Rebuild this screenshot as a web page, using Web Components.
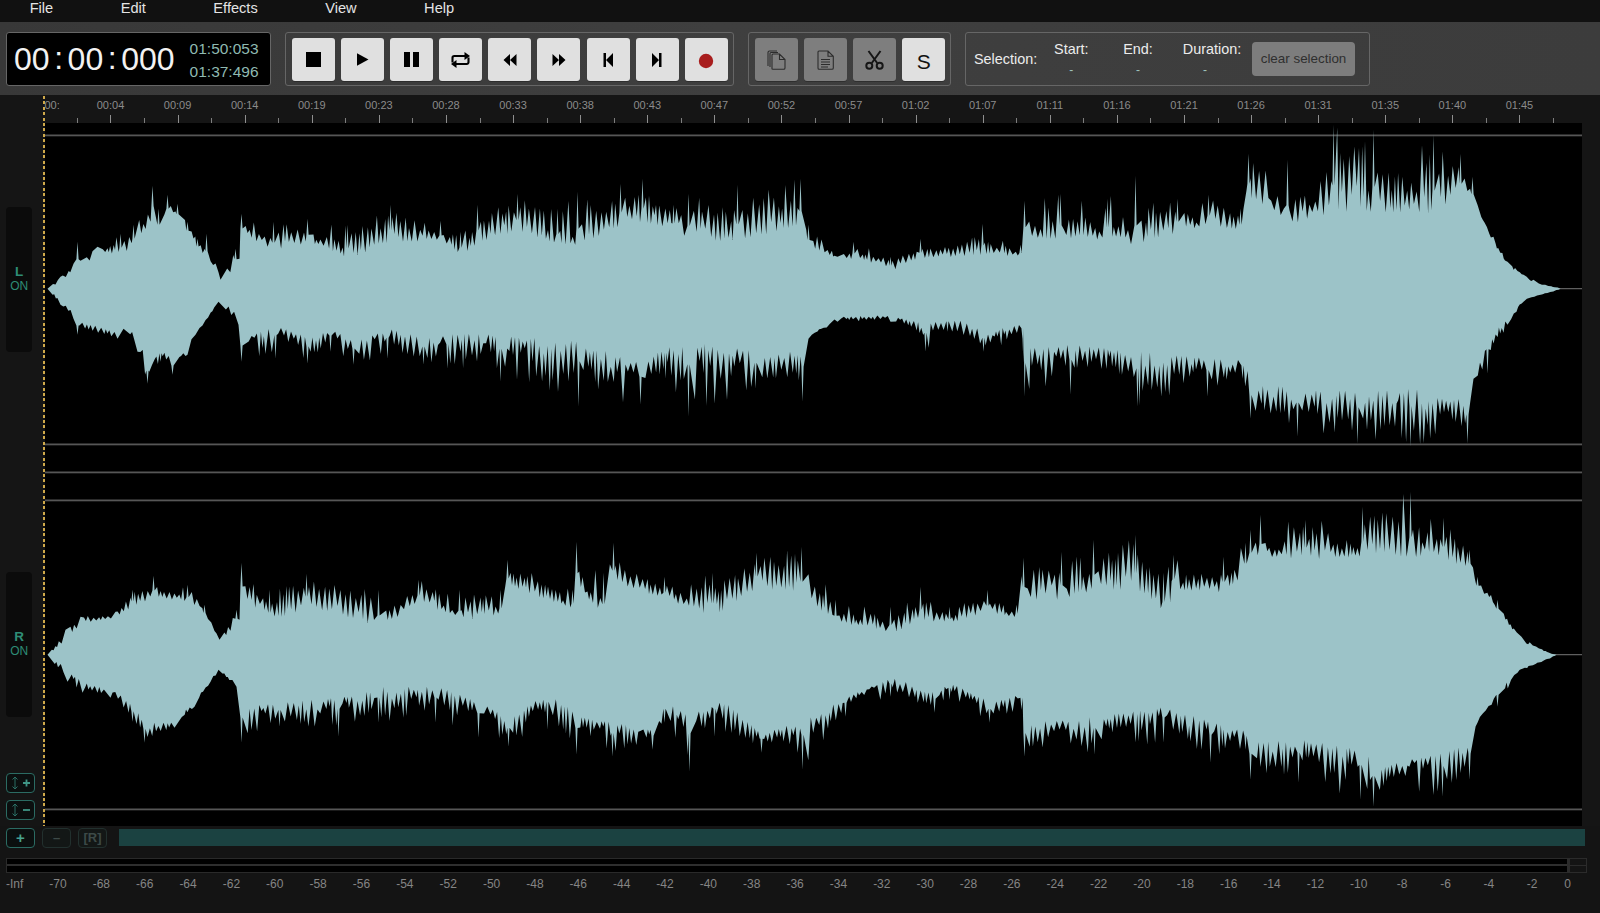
<![CDATA[<!DOCTYPE html>
<html lang="en"><head><meta charset="utf-8"><title>Waveform editor</title>
<style>
html,body{margin:0;padding:0;width:1600px;height:913px;overflow:hidden;background:#141414;font-family:"Liberation Sans",Arial,sans-serif}
svg{display:block}
</style>
<script>
const def=(n,css,html,extra)=>{customElements.define(n,class extends HTMLElement{
  connectedCallback(){ if(this.shadowRoot)return; const r=this.attachShadow({mode:'open'}); r.innerHTML='<style>'+css+'</style>'+(typeof html==='function'?html(this):html); if(extra)extra(r,this);}
});};

def('wf-app',`:host{display:block;position:relative;width:1600px;height:913px;background:#141414;color:#ddd;font-family:"Liberation Sans",Arial,sans-serif}
.head{position:absolute;left:43.300px;top:96px;width:1.500px;height:730px;z-index:5;background:repeating-linear-gradient(#cfa94a 0 3px,transparent 3px 5.400px)}`,`<slot></slot><div class="head"></div>`);

def('wf-menu',`:host{display:flex;height:22px;box-sizing:border-box;background:#111;padding-left:29.700px;gap:67.500px;font-size:14.600px;line-height:17px;color:#e4e4e4;overflow:hidden}`,`<slot></slot>`);

def('wf-toolbar',`:host{display:flex;height:73px;box-sizing:border-box;padding:10px 0 0 6px;background:linear-gradient(90deg,#383838,#3f3f3f 45%,#3c3c3c);align-items:flex-start}`,`<slot></slot>`);

def('wf-clock',`:host{display:flex;box-sizing:border-box;width:265px;height:54px;background:#000;border:1px solid #666;border-radius:3px;align-items:center;padding-left:7px;color:#f2f2f2}
.big{display:flex;font-size:32px;line-height:32px}.c{width:18px;text-align:center;margin-top:-1px}
.small{margin-left:15px;color:#8fbab2;font-size:15.500px;line-height:22.400px;margin-top:3px}`,
`<div class="big"><span>00</span><span class="c">:</span><span>00</span><span class="c">:</span><span>000</span></div><div class="small"><div>01:50:053</div><div>01:37:496</div></div>`);

def('wf-group',`:host{display:flex;box-sizing:border-box;height:54px;border:1px solid #666;border-radius:3px;padding:5px 0 0 6px;gap:6.100px}`,`<slot></slot>`);

def('wf-btn',`:host{display:flex;flex:none;width:43px;height:43px;border-radius:3px;background:#e0e0e0;align-items:center;justify-content:center;box-shadow:0 1px 0 rgba(0,0,0,.25)}
:host([dim]){background:#7e7e7e}`,`<slot></slot>`);

def('wf-selection',`:host{display:flex;box-sizing:border-box;width:405px;height:54px;border:1px solid #666;border-radius:3px;padding-left:8px;align-items:center;font-size:14.400px;color:#ececec}
.l{width:64px;flex:none}
.col{display:flex;flex:none;flex-direction:column;align-items:center;height:42px;margin-top:2px}
.col b{font-weight:400;line-height:18px;margin-top:1px}.col i{font-style:normal;color:#9fc3bc;font-size:12px;line-height:14px;margin-top:5px}
.btn{flex:none;box-sizing:border-box;width:103px;height:34px;background:#7d7d7d;border-radius:4px;color:#2f2f2f;font-size:13.400px;line-height:34px;text-align:center;margin-left:-.5px}`,
`<div class="l">Selection:</div>
<div class="col" style="width:66.500px"><b>Start:</b><i>-</i></div>
<div class="col" style="width:67px"><b>End:</b><i>-</i></div>
<div class="col" style="width:81px"><b>Duration:</b><i style="margin-right:14px">-</i></div>
<div class="btn">clear selection</div>`);

const labels=['00:','00:04','00:09','00:14','00:19','00:23','00:28','00:33','00:38','00:43','00:47','00:52','00:57','01:02','01:07','01:11','01:16','01:21','01:26','01:31','01:35','01:40','01:45'];
def('wf-ruler',`:host{display:block;box-sizing:border-box;height:28px;background:#151515;overflow:hidden}
.labs{display:flex;padding-left:9.850px;height:20px;font-size:11px;line-height:21px;color:#8b8b8b}
.labs span{flex:none;width:67.100px;text-align:center}
.labs span:first-child{text-align:left;padding-left:34.600px;box-sizing:border-box}
.t{display:flex;align-items:flex-end;height:8px;padding-left:43.400px}
.t i{flex:none;width:33.550px;box-sizing:border-box;height:5px;border-left:1.200px solid #7d7d7d}
.t i:nth-child(odd){height:8px;border-left-color:#8f8f8f}
.t i:first-child{border-color:transparent}`,
()=>`<div class="labs">${labels.map(l=>`<span>${l}</span>`).join('')}</div><div class="t">${'<i></i>'.repeat(46)}</div>`);

/* anchors: x, peak amplitude, core amplitude */
const LT=[[47,0,0],[60,12,10],[73,25,20],[77,47,22],[80,28,24],[97,42,35],[120,55,35],[133,64,44],[152,103,74],[158,80,57],[167,94,74],[177,85,70],[187,67,54],[197,50,39],[206,55,30],[220,9,8],[235,40,25],[239,30,25],[241,75,54],[273,67,37],[307,70,47],[347,64,30],[390,84,47],[440,68,47],[460,57,34],[477,84,47],[517,95,57],[557,80,44],[577,97,44],[620,105,64],[642,110,67],[673,84,57],[688,95,49],[737,104,47],[800,110,64],[808,64,42],[837,32,29],[853,47,30],[890,32,19],[920,50,30],[982,65,34],[1020,44,32],[1024,88,50],[1060,95,50],[1107,90,49],[1135,113,42],[1177,90,57],[1208,94,64],[1240,80,57],[1243,80,74],[1248,135,92],[1287,129,64],[1333,164,77],[1373,159,77],[1433,154,74],[1460,135,92],[1472,112,87],[1477,84,77],[1493,52,42],[1507,27,22],[1533,9,5],[1560,0,0]];
const LB=[[47,0,0],[60,16,14],[73,30,26],[77,46,33],[117,50,44],[123,40,33],[137,63,53],[147,95,76],[160,73,61],[172,86,73],[187,66,58],[195,46,40],[218,13,13],[238,36,26],[241,73,50],[275,70,36],[307,75,50],[330,63,40],[353,76,53],[387,70,40],[423,76,50],[447,80,45],[500,93,46],[578,118,53],[640,116,76],[665,90,53],[688,128,53],[755,100,63],[802,113,63],[808,50,46],[837,33,28],[890,33,26],[925,63,36],[947,43,28],[983,63,43],[1022,50,35],[1024,108,60],[1070,106,56],[1137,118,63],[1207,108,70],[1242,90,71],[1250,130,96],[1297,148,99],[1357,155,103],[1410,158,100],[1467,155,113],[1473,90,83],[1487,85,50],[1507,36,28],[1523,13,10],[1560,0,0]];
const RT=[[47,0,0],[65,25,18],[80,38,32],[115,43,37],[132,65,48],[153,79,58],[187,70,52],[204,50,38],[219,15,13],[236,45,32],[239,35,32],[241,92,58],[269,65,32],[306,81,48],[378,65,28],[418,75,52],[459,65,35],[500,65,38],[507,95,68],[572,65,45],[576,113,68],[603,82,37],[613,112,72],[664,78,55],[712,82,38],[756,102,68],[801,108,58],[835,55,32],[890,48,22],[920,68,35],[949,48,30],[987,65,42],[1016,50,37],[1023,97,55],[1061,103,55],[1093,115,65],[1135,120,65],[1163,82,40],[1173,100,65],[1223,98,62],[1245,112,82],[1250,125,92],[1260,140,98],[1305,135,95],[1362,148,98],[1410,163,98],[1443,137,95],[1469,105,85],[1477,78,65],[1497,55,42],[1521,18,12],[1551,1,0],[1556,0,0]];
const RB=[[47,0,0],[67,27,18],[82,38,28],[110,43,35],[132,67,52],[144,88,68],[174,73,68],[194,52,42],[218,15,15],[236,32,32],[241,88,52],[279,72,48],[338,82,42],[378,68,32],[435,68,32],[478,83,48],[508,92,65],[547,75,35],[576,100,62],[612,102,68],[652,95,75],[664,68,48],[689,117,62],[714,82,42],[761,98,78],[802,115,65],[845,62,42],[890,42,23],[934,58,38],[949,45,28],[989,68,48],[1021,55,38],[1024,102,68],[1094,100,62],[1163,88,52],[1210,108,68],[1245,95,75],[1250,125,88],[1298,128,85],[1360,145,95],[1373,152,108],[1442,142,98],[1469,125,88],[1477,68,62],[1497,52,35],[1517,18,15],[1556,0,0]];

function rng(s){return()=>{s|=0;s=s+0x6D2B79F5|0;let t=Math.imul(s^s>>>15,1|s);t=t+Math.imul(t^t>>>7,61|t)^t;return((t^t>>>14)>>>0)/4294967296}}
function edge(a,seed){
  const r=rng(seed),pts=[];
  const at=x=>{for(let i=1;i<a.length;i++)if(x<=a[i][0]){const A=a[i-1],B=a[i],k=(x-A[0])/(B[0]-A[0]||1);return[A[1]+(B[1]-A[1])*k,A[2]+(B[2]-A[2])*k]}return[0,0]};
  const xs=a.map(q=>q[0]);
  let m=.4,next=0;
  for(let x=a[0][0]+1;x<a[a.length-1][0];){
    const step=2.500+r()*4,near=xs.some(q=>Math.abs(q-x)<1.800),[p,v]=at(x);
    if(x>next){m=.12+r()*.5;next=x+8+r()*18}
    if(!near){
      let t=m+r()*.28;if(r()<.16)t=.72+r()*.28;
      pts.push([x,v+(p-v)*t]);
      const nx=x+step*.5;
      if(!xs.some(q=>Math.abs(q-nx)<1.800)){
        let d=m*.55*r();if(r()<.2)d=0;
        pts.push([nx,v+(p-v)*d]);
      }
    }
    x+=step;
  }
  a.forEach(([x,p,v])=>{ if(p-v>10){pts.push([x-1.100,v+(p-v)*.3],[x,p],[x+1.100,v+(p-v)*.3])} else pts.push([x,p]); });
  return pts.sort((m,n)=>m[0]-n[0]);
}
function wave(top,bot,cy,s){
  const T=edge(top,s),B=edge(bot,s+7).reverse();
  return 'M'+T.map(p=>p[0].toFixed(1)+' '+(cy-p[1]).toFixed(1)).concat(B.map(p=>p[0].toFixed(1)+' '+(cy+p[1]).toFixed(1))).join('L')+'Z';
}
def('wf-workspace',`:host{display:flex;height:703px;background:#151515}
.gut{flex:none;box-sizing:border-box;width:44.500px;padding:83.700px 0 0 6px;display:flex;flex-direction:column}
.pill{box-sizing:border-box;width:26.400px;height:145px;border-radius:4px;background:#0b0b0b;color:#2e8d76;text-align:center;padding-top:57px;font-size:12px;line-height:14px}
.pill b{display:block;font-size:13.500px;line-height:15px;font-weight:700}
.pill+.pill{margin-top:220px}
.ib{box-sizing:border-box;width:29px;height:20px;border:1px solid #2b6b63;border-radius:4px;background:#0b0f0f;display:flex;align-items:center;justify-content:center;margin-top:7px}
.c{flex:none;width:1537.500px;height:703px;background:#000}
svg{display:block}`,
()=>`<div class="gut"><div class="pill"><b>L</b>ON</div><div class="pill"><b>R</b>ON</div>
<div class="ib" style="margin-top:56px"><svg width="22" height="14" viewBox="0 0 22 14" fill="none" stroke="#2a6f65"><path d="M5 1v12M2.500 3.500 5 1l2.500 2.500M2.500 10.500 5 13l2.500-2.500"/><path d="M13 7h7M16.500 3.500v7" stroke="#3f9686" stroke-width="1.800"/></svg></div>
<div class="ib"><svg width="22" height="14" viewBox="0 0 22 14" fill="none" stroke="#2a6f65"><path d="M5 1v12M2.500 3.500 5 1l2.500 2.500M2.500 10.500 5 13l2.500-2.500"/><path d="M13 7h7" stroke="#3f9686" stroke-width="1.800"/></svg></div></div>
<div class="c"><svg width="1537.500" height="703" viewBox="44.500 123 1537.500 703">
<g fill="#565656"><rect x="44.500" y="134.500" width="1537.500" height="1.800"/><rect x="44.500" y="443.500" width="1537.500" height="1.800"/><rect x="44.500" y="471.500" width="1537.500" height="1.800"/><rect x="44.500" y="499.500" width="1537.500" height="1.800"/><rect x="44.500" y="808.500" width="1537.500" height="1.800"/></g>
<rect x="1550" y="288.200" width="32" height="1" fill="#777"/><rect x="1550" y="654.200" width="32" height="1" fill="#777"/>
<g fill="#9cc3c8" style="filter:blur(.35px)"><path d="${wave(LT,LB,288.700,11)}"/><path d="${wave(RT,RB,654.700,29)}"/></g>
</svg></div>`);

def('wf-controls',`:host{display:flex;height:20px;margin-top:2.300px;padding-left:6px;align-items:stretch}
.b{box-sizing:border-box;flex:none;width:29px;border:1px solid #2b6b63;border-radius:4px;background:#0b0f0f;color:#47a291;font-weight:700;font-size:15px;line-height:17px;text-align:center;margin-right:7px}
.d{border-color:#22302e;background:#131716;color:#3d4a48;font-size:13px}
.bar{flex:none;width:1466.300px;height:17px;margin:.7px 0 0 4.700px;background:#1b4241}`,
`<div class="b">+</div><div class="b d">–</div><div class="b d">[R]</div><div class="bar"></div>`);

def('wf-meter',`:host{display:flex;height:15px;margin:9.500px 0 0 6px}
.m{flex:none;box-sizing:border-box;width:1561px;border:1px solid #2a2a2a;border-width:1px 0 1px 1px;background:#2e2e2e;display:flex;flex-direction:column;gap:2px}
.m i{display:block;height:5.500px;background:#000}
.e{flex:none;box-sizing:border-box;width:20px;border:1px solid #2b2b2b;border-left-width:3px;display:flex;align-items:center}
.e i{display:block;height:1.500px;width:100%;background:#2b2b2b}`,
`<div class="m"><i></i><i></i></div><div class="e"><i></i></div>`);

const dbs=['-Inf'];for(let d=-70;d<=0;d+=2)dbs.push(d===0?'0':String(d));
def('wf-scale',`:host{display:flex;margin-top:4px;font-size:12px;line-height:14px;color:#858585}
span{flex:none;width:43.360px;text-align:center}
span:first-of-type{width:36.300px;box-sizing:border-box;padding-left:6px;text-align:left}
span:last-child{margin-left:-8px}`,()=>dbs.map(d=>`<span>${d}</span>`).join(''));
</script>
</head><body>
<wf-app>
  <wf-menu><span>File</span><span>Edit</span><span>Effects</span><span>View</span><span>Help</span></wf-menu>
  <wf-toolbar>
    <wf-clock></wf-clock>
    <wf-group style="margin-left:14px;width:449px">
      <wf-btn><svg width="15" height="15" viewBox="0 0 15 15"><rect width="15" height="15" fill="#000"/></svg></wf-btn>
      <wf-btn><svg width="13" height="13" viewBox="0 0 13 13"><path d="M1 0.3 12.5 6.5 1 12.700z" fill="#000"/></svg></wf-btn>
      <wf-btn><svg width="15" height="15" viewBox="0 0 15 15"><path d="M0 0h6v15H0zM9 0h6v15H9z" fill="#000"/></svg></wf-btn>
      <wf-btn><svg width="21" height="18" viewBox="0 0 21 18"><path d="M2.500 11.500V6.800A1.800 1.800 0 0 1 4.300 5H15M18.500 6.500v4.700A1.800 1.800 0 0 1 16.700 13H6" fill="none" stroke="#000" stroke-width="2.100"/><path d="M14.500 1l5.500 4-5.500 4zM6.500 9 1 13l5.500 4z" fill="#000"/></svg></wf-btn>
      <wf-btn><svg width="14" height="12" viewBox="0 0 14 12"><path d="M7 0v12L0.500 6zM13.500 0v12L7 6z" fill="#000"/></svg></wf-btn>
      <wf-btn><svg width="14" height="12" viewBox="0 0 14 12"><path d="M0.500 0v12L7 6zM7 0v12l6.500-6z" fill="#000"/></svg></wf-btn>
      <wf-btn><svg width="10" height="14" viewBox="0 0 10 14"><path d="M0.500 0h2.500v14H0.500zM10 0v14L3 7z" fill="#000"/></svg></wf-btn>
      <wf-btn><svg width="10" height="14" viewBox="0 0 10 14"><path d="M7 0h2.500v14H7zM0 0v14L7 7z" fill="#000"/></svg></wf-btn>
      <wf-btn><svg width="16" height="18" viewBox="0 0 16 18" style="margin-top:3px"><circle cx="8" cy="9" r="7.200" fill="#a81d1d"/></svg></wf-btn>
    </wf-group>
    <wf-group style="margin-left:14px;width:203px">
      <wf-btn dim><svg width="19" height="20" viewBox="0 0 19 20" fill="none" stroke="#2c2c2c" stroke-width="1.100"><path d="M1 16V2.500Q1 1 2.500 1H10M3 17V3.500Q3 2.500 4 2.500H11"/><path d="M5 19.300V5Q5 4 6 4H12.500L18 9.500V18Q18 19.300 16.700 19.300H6Q5 19.300 5 18.500zM12.500 4V9.500H18"/></svg></wf-btn>
      <wf-btn dim><svg width="17" height="20" viewBox="0 0 17 20" fill="none" stroke="#2c2c2c" stroke-width="1.100"><path d="M1 2Q1 1 2 1H11L16.300 6.300V18Q16.300 19.300 15 19.300H2Q1 19.300 1 18zM11 1V6.300H16.300M4 9.500H13M4 12H13M4 14.500H13M4 17H11"/></svg></wf-btn>
      <wf-btn dim><svg width="19" height="20" viewBox="0 0 19 20" fill="none" stroke="#161616" stroke-width="2"><path d="M6.800 13 15.500 1M12.200 13 3.500 1"/><circle cx="4.300" cy="15.800" r="3"/><circle cx="14.700" cy="15.800" r="3"/></svg></wf-btn>
      <wf-btn><span style="font-size:21px;color:#111;margin-top:4px">S</span></wf-btn>
    </wf-group>
    <wf-selection style="margin-left:14px"></wf-selection>
  </wf-toolbar>
  <wf-ruler></wf-ruler>
  <wf-workspace></wf-workspace>
  <wf-controls></wf-controls>
  <wf-meter></wf-meter>
  <wf-scale></wf-scale>
</wf-app>
</body></html>]]>
